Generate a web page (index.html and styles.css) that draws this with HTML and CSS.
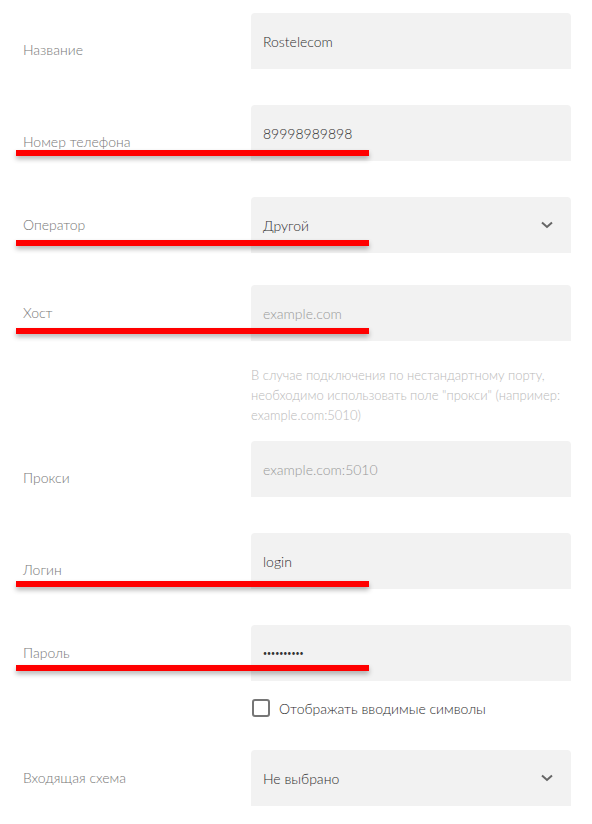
FILE: index.html
```html
<!DOCTYPE html>
<html lang="ru">
<head>
<meta charset="utf-8">
<title>Форма</title>
<link rel="stylesheet" href="styles.css">
</head>
<body>
<form class="form">
  <div class="row">
    <label class="label label-low">Название</label>
    <div class="field"><span class="value">Rostelecom</span></div>
  </div>
  <div class="row">
    <label class="label label-low">Номер телефона</label>
    <div class="field"><span class="value">89998989898</span></div>
  </div>
  <div class="row">
    <label class="label label-mid">Оператор</label>
    <div class="field select"><span class="value">Другой</span>
      <svg class="chev" width="12" height="8" viewBox="0 0 12 8"><path d="M1 1.5 L6 6 L11 1.5" fill="none" stroke="#666" stroke-width="2"/></svg>
    </div>
  </div>
  <div class="row row-tight">
    <label class="label label-mid">Хост</label>
    <div class="field"><span class="placeholder">example.com</span></div>
  </div>
  <div class="row row-hint">
    <span></span>
    <p class="hint">В случае подключения по нестандартному порту, необходимо использовать поле "прокси" (например: example.com:5010)</p>
  </div>
  <div class="row row-after-hint">
    <label class="label label-low">Прокси</label>
    <div class="field"><span class="placeholder">example.com:5010</span></div>
  </div>
  <div class="row">
    <label class="label label-low">Логин</label>
    <div class="field"><span class="value">login</span></div>
  </div>
  <div class="row">
    <label class="label label-mid">Пароль</label>
    <div class="field"><span class="dots">••••••••••</span></div>
  </div>
  <div class="row row-check">
    <span></span>
    <div class="check"><span class="box"></span><span class="check-text">Отображать вводимые символы</span></div>
  </div>
  <div class="row row-last">
    <label class="label label-mid">Входящая схема</label>
    <div class="field select"><span class="value">Не выбрано</span>
      <svg class="chev" width="12" height="8" viewBox="0 0 12 8"><path d="M1 1.5 L6 6 L11 1.5" fill="none" stroke="#666" stroke-width="2"/></svg>
    </div>
  </div>

  <span class="mark mark-1"></span>
  <span class="mark mark-2"></span>
  <span class="mark mark-3"></span>
  <span class="mark mark-4"></span>
  <span class="mark mark-5"></span>
</form>
</body>
</html>
```

FILE: styles.css
```css
html, body {
  margin: 0;
  padding: 0;
  background: #ffffff;
}
body {
  font-family: Lato, "Noto Sans", sans-serif;
  font-size: 14px;
  font-weight: 300;
  color: #444;
}
.form {
  position: relative;
  display: flex;
  flex-direction: column;
  padding-top: 13px;
  margin: 0;
}
.row {
  display: grid;
  grid-template-columns: 228px 320px;
  padding-left: 23px;
  margin-top: 36px;
}
.row:first-child { margin-top: 0; }
.row-tight { margin-top: 32px; }
.row-hint { margin-top: 24px; }
.row-after-hint { margin-top: 16px; }
.row-check { margin-top: 18px; }
.row-last { margin-top: 33px; }

.label {
  color: #777;
  font-size: 14px;
  line-height: 20px;
}
.label-low { padding-top: 27px; }
.label-mid { align-self: center; }

.field {
  height: 56px;
  background: #f2f2f2;
  border-radius: 4px 4px 0 0;
  display: flex;
  align-items: center;
  padding: 0 12px;
  box-sizing: border-box;
}
.select { justify-content: space-between; padding-right: 18px; }
.value { color: #2e2e2e; font-size: 14px; font-weight: 300; }
.placeholder { color: #999; font-size: 14px; }
.dots { color: #333; font-size: 7px; letter-spacing: 0; font-weight: 400; }
.chev { display: block; }

.hint {
  margin: 0;
  color: #b9b9b9;
  font-size: 13px;
  line-height: 20px;
}

.check {
  display: flex;
  align-items: center;
  height: 18px;
}
.box {
  width: 18px;
  height: 18px;
  box-sizing: border-box;
  border: 2px solid #767676;
  border-radius: 3px;
  margin-left: 1px;
}
.check-text {
  margin-left: 9px;
  color: #2e2e2e;
  font-size: 14px;
  font-weight: 300;
}

.mark {
  position: absolute;
  left: 16px;
  width: 353px;
  height: 6px;
  background: #ff0000;
  box-shadow: 0 3px 5px rgba(0, 0, 0, 0.3);
}
.mark-1 { top: 150px; }
.mark-2 { top: 240px; }
.mark-3 { top: 328px; }
.mark-4 { top: 581px; }
.mark-5 { top: 665px; }
```
